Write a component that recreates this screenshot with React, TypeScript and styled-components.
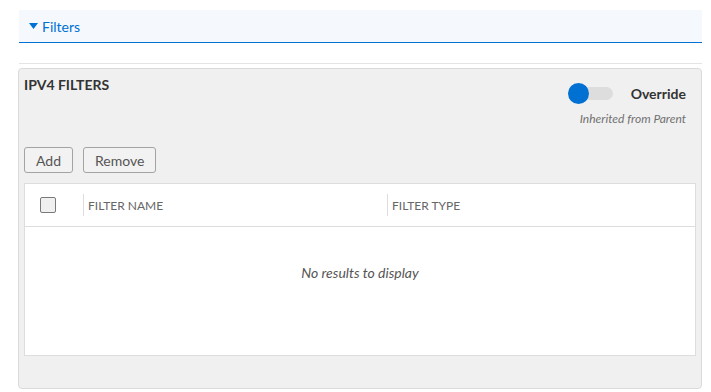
import React from "react";
import styled, { createGlobalStyle } from "styled-components";

const GlobalStyle = createGlobalStyle`
  html, body { margin: 0; padding: 0; background: #ffffff; }
  body { font-family: Lato, "Open Sans", "Liberation Sans", sans-serif; color: #333; }
  * { box-sizing: border-box; }
`;

const Page = styled.div`
  padding: 10px 9px 0 18px;
  width: 711px;
`;

const SectionHeader = styled.div`
  margin-left: 1px;
  height: 33px;
  background: #f5f9fe;
  border-bottom: 1px solid #0070d2;
  display: flex;
  align-items: center;
  padding-left: 10px;
  gap: 4px;
  color: #0070d2;
  font-size: 14px;
`;

const Caret = styled.svg`
  width: 9px;
  height: 6px;
  display: block;
`;

const Separator = styled.div`
  margin: 20px 0 0 1px;
  height: 1px;
  background: #e4e4e4;
`;

const Panel = styled.section`
  margin-top: 4px;
  background: #f0f0f0;
  border: 1px solid #dadada;
  border-radius: 4px;
  padding: 7px 5px 32px 5px;
`;

const TopRow = styled.div`
  display: flex;
  justify-content: space-between;
  align-items: flex-start;
`;

const Title = styled.h3`
  margin: 0;
  font-size: 14px;
  font-weight: 700;
  color: #333;
  line-height: 17px;
`;

const OverrideBox = styled.div`
  display: flex;
  flex-direction: column;
  align-items: flex-end;
  margin-right: 10px;
  margin-top: 7px;
`;

const ToggleRow = styled.div`
  display: flex;
  align-items: center;
  gap: 18px;
  height: 20px;
`;

const Track = styled.div`
  position: relative;
  width: 45px;
  height: 13px;
  border-radius: 7px;
  background: #dddddd;
`;

const Knob = styled.div`
  position: absolute;
  left: 0;
  top: -4px;
  width: 21px;
  height: 21px;
  border-radius: 50%;
  background: #0070d2;
`;

const OverrideLabel = styled.span`
  font-size: 14px;
  font-weight: 700;
  color: #333;
`;

const Inherited = styled.span`
  margin-top: 8px;
  font-size: 12px;
  line-height: 15px;
  font-style: italic;
  color: #707070;
`;

const ButtonRow = styled.div`
  display: flex;
  gap: 10px;
  margin-top: 21px;
`;

const Button = styled.button`
  height: 26px;
  padding: 0 11px;
  border: 1px solid #a3a3a3;
  border-radius: 3px;
  background: #f2f2f2;
  color: #555;
  font-family: inherit;
  font-size: 14px;
`;

const Table = styled.div`
  margin-top: 10px;
  background: #ffffff;
  border: 1px solid #dddddd;
`;

const HeaderRow = styled.div`
  display: grid;
  grid-template-columns: 58px 304px 1fr;
  height: 43px;
  border-bottom: 1px solid #dddddd;
  align-items: center;
`;

const CheckCell = styled.div`
  padding-left: 15px;
  display: flex;
  align-items: center;
`;

const Checkbox = styled.div`
  width: 16px;
  height: 16px;
  border: 1px solid #7a7a7a;
  border-radius: 2px;
  background: #f0f0f0;
`;

const HeadCell = styled.div`
  height: 22px;
  border-left: 1px solid #dddddd;
  padding-left: 4px;
  display: flex;
  align-items: center;
  font-size: 12px;
  color: #666;
  text-transform: uppercase;
`;

const EmptyBody = styled.div`
  height: 128px;
  padding-top: 37px;
  text-align: center;
  font-size: 14px;
  font-style: italic;
  color: #555;
`;

export default function App() {
  return (
    <>
      <GlobalStyle />
      <Page>
        <SectionHeader>
          <Caret viewBox="0 0 9 6">
            <path d="M0 0 H9 L4.5 6 Z" fill="#0070d2" />
          </Caret>
          Filters
        </SectionHeader>
        <Separator />
        <Panel>
          <TopRow>
            <Title>IPV4 FILTERS</Title>
            <OverrideBox>
              <ToggleRow>
                <Track>
                  <Knob />
                </Track>
                <OverrideLabel>Override</OverrideLabel>
              </ToggleRow>
              <Inherited>Inherited from Parent</Inherited>
            </OverrideBox>
          </TopRow>
          <ButtonRow>
            <Button>Add</Button>
            <Button>Remove</Button>
          </ButtonRow>
          <Table>
            <HeaderRow>
              <CheckCell>
                <Checkbox />
              </CheckCell>
              <HeadCell>Filter Name</HeadCell>
              <HeadCell>Filter Type</HeadCell>
            </HeaderRow>
            <EmptyBody>No results to display</EmptyBody>
          </Table>
        </Panel>
      </Page>
    </>
  );
}
